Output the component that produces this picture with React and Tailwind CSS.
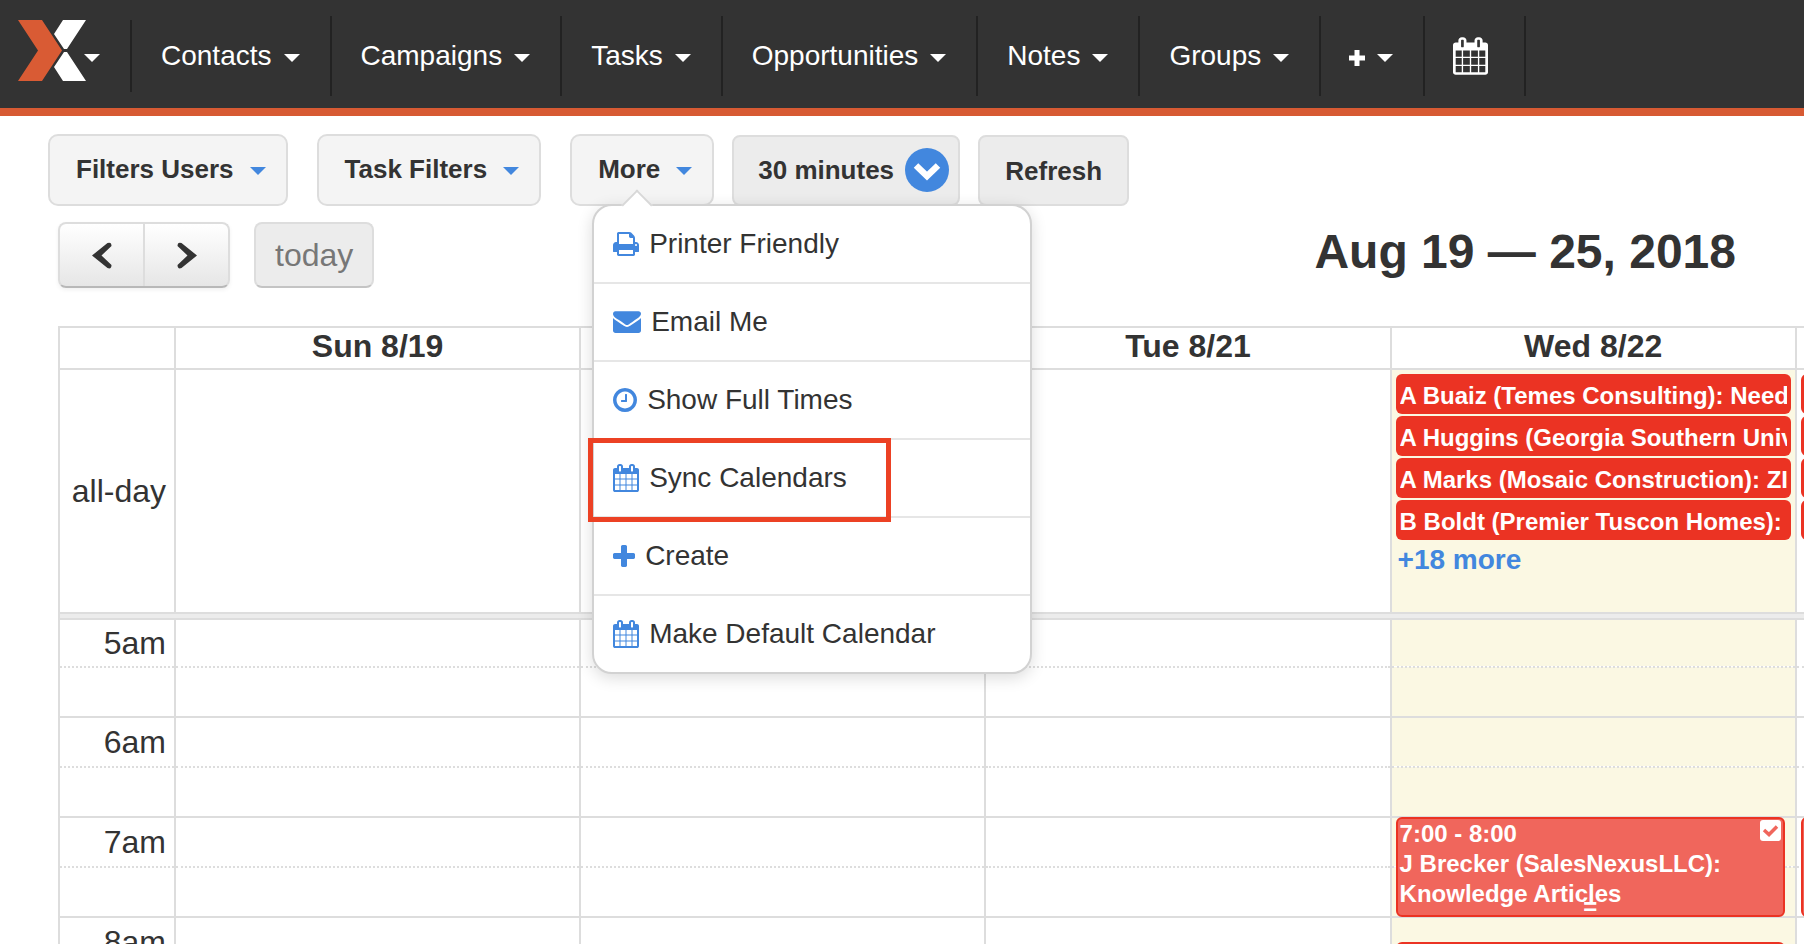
import React from "react";

const CALENDAR_PATH =
  "M192 1664h288v-288h-288v288zm352 0h320v-288h-320v288zm-352-352h288v-320h-288v320zm352 0h320v-320h-320v320zm-352-384h288v-288h-288v288zm736 736h320v-288h-320v288zm-384-736h320v-288h-320v288zm768 736h288v-288h-288v288zm-384-352h320v-320h-320v320zm-352-864v-288q0-13-9.500-22.500t-22.500-9.500h-64q-13 0-22.500 9.500t-9.500 22.500v288q0 13 9.500 22.500t22.500 9.500h64q13 0 22.500-9.500t9.500-22.500zm736 864h288v-320h-288v320zm-384-384h320v-288h-320v288zm384 0h288v-288h-288v288zm32-480v-288q0-13-9.500-22.500t-22.500-9.500h-64q-13 0-22.500 9.500t-9.500 22.500v288q0 13 9.500 22.500t22.500 9.500h64q13 0 22.500-9.500t9.500-22.500zm384-64v1280q0 52-38 90t-90 38h-1408q-52 0-90-38t-38-90v-1280q0-52 38-90t90-38h128v-96q0-66 47-113t113-47h64q66 0 113 47t47 113v96h384v-96q0-66 47-113t113-47h64q66 0 113 47t47 113v96h128q52 0 90 38t38 90z";

const ICONS = {
  print: {
    box: "64 128 1664 1536",
    size: "w-[26px] h-6",
    d: "M448 1536h896v-256h-896v256zm0-640h896v-384h-160q-40 0-68-28t-28-68v-160h-640v640zm1152 64q0-26-19-45t-45-19-45 19-19 45 19 45 45 19 45-19 19-45zm128 0v416q0 13-9.500 22.500t-22.500 9.500h-224v160q0 40-28 68t-68 28h-960q-40 0-68-28t-28-68v-160h-224q-13 0-22.500-9.500t-9.500-22.500v-416q0-79 56.500-135.500t135.500-56.500h64v-544q0-40 28-68t68-28h672q40 0 88 20t76 48l152 152q28 28 48 76t20 88v256h64q79 0 135.500 56.500t56.500 135.500z",
  },
  envelope: {
    box: "0 256 1792 1408",
    size: "w-7 h-[22px]",
    d: "M1792 710v794q0 66-47 113t-113 47h-1472q-66 0-113-47t-47-113v-794q44 49 101 87 362 246 497 345 57 42 92.500 65.500t94.500 48 110 24.500h2q51 0 110-24.500t94.500-48 92.500-65.500q170-123 498-345 57-39 100-87zm0-294q0 79-49 151t-122 123q-376 261-468 325-10 7-42.500 31t-54 38.500-52 32.500-57.500 27-50 9h-2q-23 0-50-9t-57.500-27-52-32.500-54-38.500-42.500-31q-91-64-262-177.500t-205-136.500q-62-42-117-115.500t-55-136.500q0-78 41.500-130t118.500-52h1472q65 0 112.500 47t47.500 113z",
  },
  clock: {
    box: "128 128 1536 1536",
    size: "w-6 h-6",
    d: "M1024 544v448q0 14-9 23t-23 9h-320q-14 0-23-9t-9-23v-64q0-14 9-23t23-9h224v-352q0-14 9-23t23-9h64q14 0 23 9t9 23zm416 352q0-148-73-273t-198-198-273-73-273 73-198 198-73 273 73 273 198 198 273 73 273-73 198-198 73-273zm224 0q0 209-103 385.500t-279.500 279.500-385.500 103-385.500-103-279.500-279.500-103-385.500 103-385.500 279.500-279.500 385.500-103 385.500 103 279.500 279.500 103 385.500z",
  },
  calendar: { box: "64 0 1664 1792", size: "w-[26px] h-7", d: CALENDAR_PATH },
  plus: {
    box: "192 128 1408 1408",
    size: "w-[22px] h-[22px]",
    d: "M1600 736v192q0 40-28 68t-68 28h-416v416q0 40-28 68t-68 28h-192q-40 0-68-28t-28-68v-416h-416q-40 0-68-28t-28-68v-192q0-40 28-68t68-28h416v-416q0-40 28-68t68-28h192q40 0 68 28t28 68v416h416q40 0 68 28t28 68z",
  },
};

function Icon({ name }) {
  const icon = ICONS[name];
  return (
    <svg viewBox={icon.box} className={`${icon.size} shrink-0 fill-[#4287de]`} aria-hidden="true">
      <path d={icon.d} />
    </svg>
  );
}

function Caret() {
  return (
    <svg viewBox="0 0 16 8" className="mt-1 h-2 w-4 shrink-0 fill-current" aria-hidden="true">
      <path d="M0 0h16L8 8z" />
    </svg>
  );
}

function Logo() {
  return (
    <svg viewBox="0 0 68 61" className="h-[61px] w-[68px] shrink-0 self-start" aria-hidden="true">
      <path d="M0 0h24l20 30.500L24 61H0l20-30.500z" fill="#d95b34" />
      <path d="M45 0h23L49 29h-3L36 14zM46 32h3L68 61H45L36 47z" fill="#fff" />
    </svg>
  );
}

const NAV = ["Contacts", "Campaigns", "Tasks", "Opportunities", "Notes", "Groups"];

function NavBar() {
  return (
    <nav className="flex items-center border-b-8 border-[#d75a33] bg-[#333] pt-4 pb-3 text-[28px] leading-8 text-white">
      <button className="flex h-[72px] w-[132px] items-center border-r-2 border-[#222] pl-[18px]" aria-label="Home">
        <Logo />
        <span className="-ml-0.5 flex">
          <Caret />
        </span>
      </button>
      {NAV.map((label) => (
        <button key={label} className="flex h-20 items-center gap-3 border-r-2 border-[#222] pr-[30px] pl-[29px]">
          {label}
          <Caret />
        </button>
      ))}
      <button className="flex h-20 items-center gap-3 border-r-2 border-[#222] pr-[30px] pl-7" aria-label="Add">
        <svg viewBox="0 0 16 16" className="mt-1 h-4 w-4 fill-white" aria-hidden="true">
          <path d="M5.500 0h5v5.500h5.500v5h-5.500V16h-5v-5.500H0v-5h5.500z" />
        </svg>
        <Caret />
      </button>
      <button className="flex h-20 items-center border-r-2 border-[#222] pr-9 pl-7" aria-label="Calendar">
        <svg viewBox="64 0 1664 1792" className="h-[38px] w-[35px] fill-white" aria-hidden="true">
          <path d={CALENDAR_PATH} />
        </svg>
      </button>
    </nav>
  );
}

const MENU = [
  ["print", "Printer Friendly"],
  ["envelope", "Email Me"],
  ["clock", "Show Full Times"],
  ["calendar", "Sync Calendars"],
  ["plus", "Create"],
  ["calendar", "Make Default Calendar"],
];

function MoreMenu() {
  return (
    <div className="absolute top-[70px] left-[22px] z-20 w-[440px] rounded-[20px] border-2 border-[#d2d2d2] bg-white font-normal shadow-[0_4px_16px_rgba(0,0,0,0.14)]">
      <span className="absolute -top-3 left-8 h-[22px] w-[22px] rotate-45 border-t-2 border-l-2 border-[#d8d8d8] bg-white" />
      <ul className="relative divide-y-2 divide-[#e6e6e6]">
        {MENU.map(([icon, label]) => (
          <li key={label} className="relative box-content h-[76px]">
            <button className="flex h-full w-full items-center gap-[10px] pl-[19px] text-[28px] leading-8 text-[#333]">
              <Icon name={icon} />
              {label}
            </button>
            {label === "Sync Calendars" && (
              <span className="pointer-events-none absolute -top-0.5 -left-1.5 h-[84px] w-[303px] border-[5px] border-[#ec4124]" />
            )}
          </li>
        ))}
      </ul>
    </div>
  );
}

function FilterButton({ children }) {
  return (
    <button className="flex h-[72px] items-center gap-4 rounded-[10px] border-2 border-[#ddd] bg-[#f4f4f4] pr-5 pb-0.5 pl-[26px]">
      {children}
      <span className="flex text-[#4287de]">
        <Caret />
      </span>
    </button>
  );
}

function Toolbar() {
  return (
    <div className="flex items-end gap-[18px] pt-[18px] pl-12 text-[26px] leading-8 font-bold text-[#333]">
      <div className="flex gap-[29px]">
        <FilterButton>Filters Users</FilterButton>
        <FilterButton>Task Filters</FilterButton>
        <div className="relative">
          <FilterButton>More</FilterButton>
          <MoreMenu />
        </div>
      </div>
      <div className="relative">
        <select
          aria-label="Slot length"
          className="block h-[71px] appearance-none rounded-lg border-2 border-[#ddd] bg-[#ececec] pr-16 pb-0.5 pl-6 font-bold"
        >
          <option>30 minutes</option>
        </select>
        <svg viewBox="0 0 44 44" className="pointer-events-none absolute top-[13px] right-[11px] h-11 w-11" aria-hidden="true">
          <circle cx="22" cy="22" r="22" fill="#4287de" />
          <path d="M11 17.500l11 10.500 11-10.500" fill="none" stroke="#fff" strokeWidth="6.500" />
        </svg>
      </div>
      <button className="h-[71px] rounded-lg border-2 border-[#ddd] bg-[#ececec] px-[25px]">Refresh</button>
    </div>
  );
}

function Chevron({ d }) {
  return (
    <svg viewBox="0 0 20 27" className="h-[27px] w-5 fill-[#333]" aria-hidden="true">
      <path d={d} />
    </svg>
  );
}

function CalendarHeader() {
  return (
    <div className="flex items-center pt-4 pr-[68px] pl-[58px] text-[#333]">
      <div className="flex h-[66px] w-[172px] divide-x-2 divide-[#ddd] rounded-lg border-2 border-[#ddd] border-b-[#b8b8b8] bg-linear-to-b from-white to-[#e6e6e6] shadow-[0_2px_4px_rgba(0,0,0,0.06)]">
        <button className="flex flex-1 items-center justify-center" aria-label="Previous week">
          <Chevron d="M0 13.500L15.500 1Q19.500-.5 19.500 4L9.500 13.500l10 9.500q0 4.500-4 3z" />
        </button>
        <button className="flex flex-1 items-center justify-center" aria-label="Next week">
          <Chevron d="M20 13.500L4.500 1Q.5-.5.5 4l10 9.500L.5 23q0 4.500 4 3z" />
        </button>
      </div>
      <button className="ml-6 h-[66px] rounded-lg border-2 border-[#ddd] border-b-[#c4c4c4] bg-[#ececec] px-[19px] text-[32px] leading-9 text-[#777]">
        today
      </button>
      <h1 className="ml-auto self-start text-[48px] leading-[60px] font-bold">Aug 19 — 25, 2018</h1>
    </div>
  );
}

const DAYS = ["Sun 8/19", "Mon 8/20", "Tue 8/21", "Wed 8/22", ""];
const TODAY = 3;
const ALL_DAY = [
  "A Buaiz (Temes Consulting): Need",
  "A Huggins (Georgia Southern University)",
  "A Marks (Mosaic Construction): ZI",
  "B Boldt (Premier Tuscon Homes):",
];
const HOURS = ["5am", "6am", "7am", "8am"];

function TimedEvent({ children, className }) {
  return (
    <a
      href="#event"
      className={`absolute right-[10px] left-1 z-10 h-[100px] rounded-md border-2 border-[#eb3323] bg-[#f0665c] pl-0.5 text-2xl leading-[30px] font-bold text-white ${className}`}
    >
      {children}
    </a>
  );
}

function slotEvents(hour, day) {
  if (hour === "7am" && day === 3) {
    return (
      <TimedEvent className="-top-px">
        7:00 - 8:00
        <br />
        J Brecker (SalesNexusLLC): Knowledge Articles
        <svg viewBox="0 0 21 21" className="absolute top-px right-0.5 h-[21px] w-[21px]" aria-hidden="true">
          <rect width="21" height="21" rx="3" fill="#fff" />
          <path d="M4 10l5 4.500 8-8" fill="none" stroke="#f0665c" strokeWidth="3.500" />
        </svg>
        <span className="absolute inset-x-0 bottom-0 text-center text-2xl leading-4">=</span>
      </TimedEvent>
    );
  }
  if (hour === "7am" && day === 4) return <TimedEvent className="-top-px" />;
  if (hour === "8am" && day === 3) return <TimedEvent className="top-6" />;
  return null;
}

function dayBackground(day) {
  return day === TODAY ? "bg-[#fbf8e3]" : "";
}

function WeekTable() {
  return (
    <div className="mt-[38px] pl-[58px]">
      <table className="w-[calc(100%+398px)] table-fixed border-collapse text-[32px] leading-9 text-[#333] [&_td]:border-x-2 [&_td]:border-[#ddd] [&_th]:border-2 [&_th]:border-[#ddd]">
        <colgroup>
          <col className="w-[116px]" />
          {DAYS.map((day) => (
            <col key={day} />
          ))}
        </colgroup>
        <thead>
          <tr className="h-[42px]">
            <th className="p-0" />
            {DAYS.map((day) => (
              <th key={day} className="p-0 pb-1 font-bold">
                {day}
              </th>
            ))}
          </tr>
        </thead>
        <tbody>
          <tr className="h-[244px]">
            <td className="p-0 pr-2 text-right">all-day</td>
            {DAYS.map((day, i) => (
              <td key={day} className={`p-1 align-top ${dayBackground(i)}`}>
                {i >= TODAY && (
                  <div className="flex flex-col gap-0.5 text-2xl font-bold">
                    {ALL_DAY.map((title) => (
                      <a key={title} href="#event" className="block h-10 rounded-md bg-[#eb3323] px-1 text-white">
                        <span className="block h-10 overflow-hidden leading-[44px] whitespace-nowrap">
                          {i === TODAY ? title : ""}
                        </span>
                      </a>
                    ))}
                    {i === TODAY && (
                      <a href="#more" className="pl-0.5 text-[28px] leading-9 text-[#4287de]">
                        +18 more
                      </a>
                    )}
                  </div>
                )}
              </td>
            ))}
          </tr>
          <tr className="h-1.5">
            <td colSpan={6} className="border-y-2 bg-[#ececec] p-0" />
          </tr>
          {HOURS.map((hour, n) => (
            <React.Fragment key={hour}>
              <tr className={n === 0 ? "h-12" : "h-[50px]"}>
                <td className="border-t-2 p-0 pr-2 text-right">{hour}</td>
                {DAYS.map((day, i) => (
                  <td key={day} className={`relative border-t-2 p-0 ${dayBackground(i)}`}>
                    {slotEvents(hour, i)}
                  </td>
                ))}
              </tr>
              <tr className="h-[50px] [&_td]:[border-top:2px_dotted_#ddd]">
                <td />
                {DAYS.map((day, i) => (
                  <td key={day} className={dayBackground(i)} />
                ))}
              </tr>
            </React.Fragment>
          ))}
        </tbody>
      </table>
    </div>
  );
}

export default function App() {
  return (
    <div className="h-screen overflow-hidden bg-white font-['Liberation_Sans',Arial,sans-serif]">
      <NavBar />
      <Toolbar />
      <CalendarHeader />
      <WeekTable />
    </div>
  );
}
